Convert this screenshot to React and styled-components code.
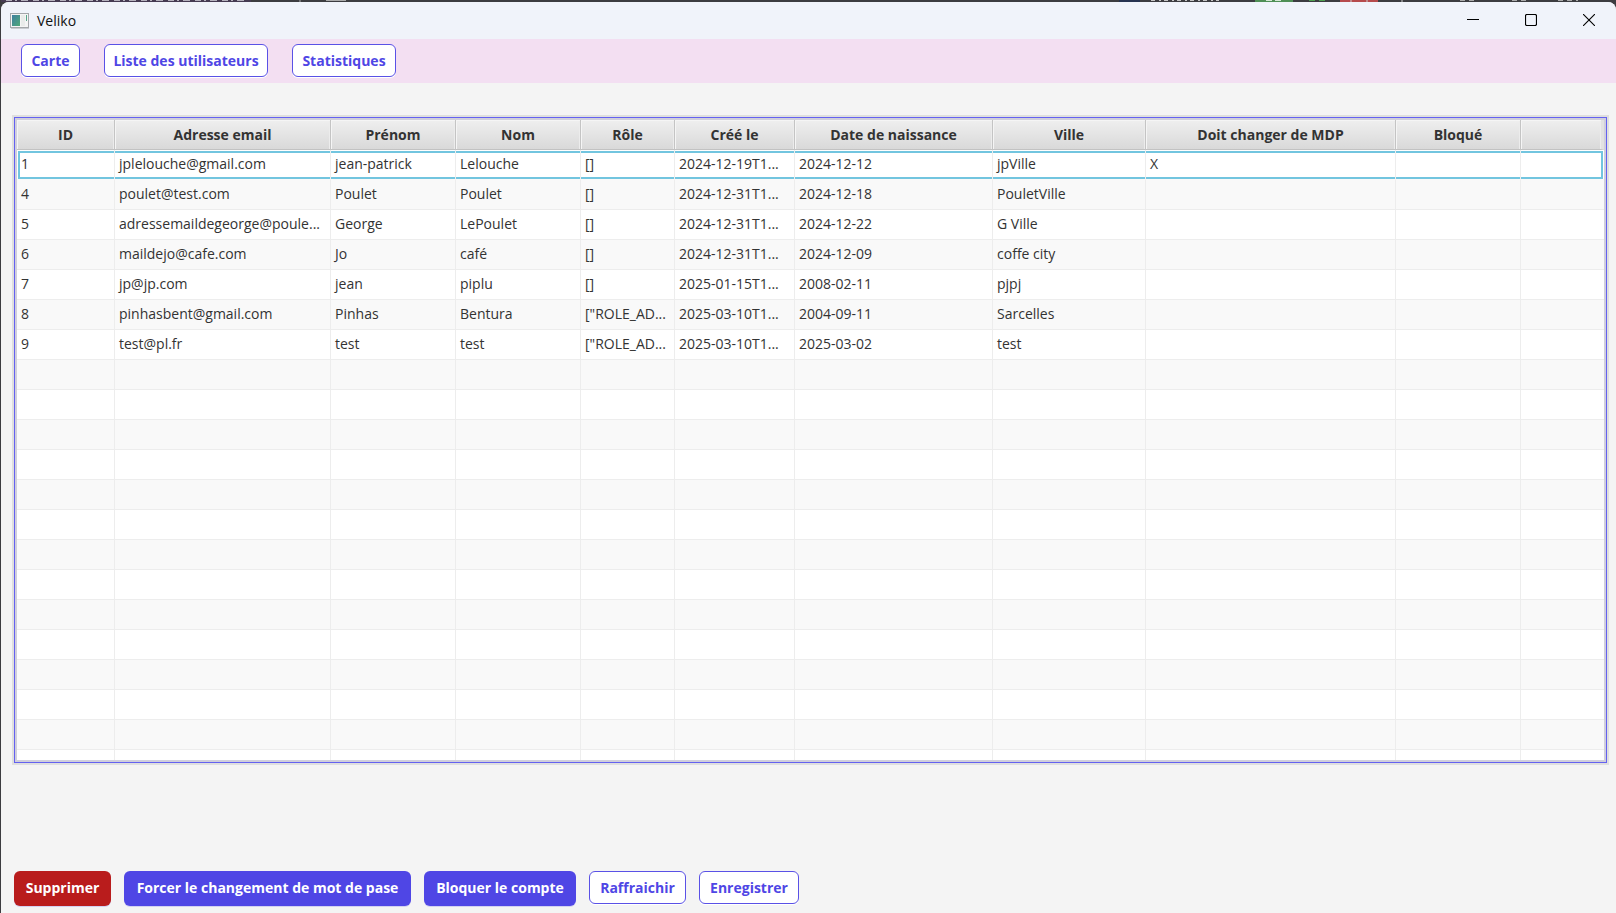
import React from 'react';
import styled, { createGlobalStyle, css } from 'styled-components';

const GlobalStyle = createGlobalStyle`
  * { box-sizing: border-box; }
  html, body { margin: 0; height: 100%; }
  #root { height: 100%; }
  body {
    background: #3c3c40;
    color: #333;
    font-family: "Open Sans", "Noto Sans", sans-serif;
    font-size: 14px;
  }
  button { font: inherit; margin: 0; cursor: pointer; }
`;

const Desktop = styled.div`
  display: flex;
  flex-direction: column;
  min-height: 100%;
  padding-left: 1px;
  overflow: hidden;
`;

const Backdrop = styled.svg`
  display: block;
  width: 100%;
  height: 2px;
  flex: none;
`;

const Window = styled.div`
  flex: 1;
  display: flex;
  flex-direction: column;
  background: #f4f4f4;
  border-radius: 8px 8px 0 0;
  overflow: hidden;
`;

const TitleBar = styled.header`
  display: flex;
  align-items: center;
  height: 37px;
  padding-left: 9px;
  background: #f0f3fa;
  color: #111;
`;

const Title = styled.h1`
  flex: 1;
  margin: 0 0 0 8px;
  font-size: 14px;
  font-weight: 400;
  line-height: 20px;
`;

const WindowControl = styled.button`
  display: flex;
  align-items: center;
  justify-content: center;
  width: 58px;
  height: 37px;
  padding: 0 0 2px;
  border: 0;
  background: none;
`;

const Controls = styled.div`
  display: flex;
  margin-right: -2px;
`;

const NavBar = styled.nav`
  display: flex;
  align-items: center;
  gap: 24px;
  height: 44px;
  padding: 0 20px 1px;
  background: #f3dff2;
`;

const Button = styled.button`
  min-width: ${(p) => p.$width}px;
  height: 33px;
  padding: 0;
  border: 1px solid #5a51e6;
  border-radius: 6px;
  background: #fff;
  color: #4f46e5;
  box-shadow: 0 1px 0 #fff;
  font-weight: 700;
  line-height: 20px;
  text-align: center;
  white-space: nowrap;
  ${(p) =>
    p.$fill &&
    css`
      height: 35px;
      padding-bottom: 2px;
      border: 0;
      background: ${p.$fill};
      color: #fff;
      box-shadow: 0 1px 0 rgba(79, 70, 229, 0.2);
    `}
`;

const Content = styled.main`
  flex: 1;
  display: flex;
  flex-direction: column;
  padding: 34px 9px 7px 13px;
`;

const TableFrame = styled.div`
  padding: 2px;
  border: 1px solid #6461f0;
  outline: 2px solid #dfdfdf;
  background: #d0cfdc;
`;

const TableView = styled.div`
  height: 640px;
  overflow: hidden;
  background: #fff;
`;

const Table = styled.table`
  width: 100%;
  table-layout: fixed;
  border-collapse: separate;
  border-spacing: 0;
`;

const Column = styled.col`
  width: ${(p) => (p.$width ? `${p.$width}px` : 'auto')};
`;

const HeadCell = styled.th`
  height: 30px;
  padding: 0 4px;
  border-right: 1px solid #c4c4c4;
  border-bottom: 1px solid #c2c2c2;
  background: linear-gradient(#efefef, #d9d9d9);
  box-shadow: inset 1px 1px 0 #f5f5f5, inset -1px 0 0 #ececec;
  font-weight: 700;
  line-height: 20px;
  text-align: center;
  white-space: nowrap;
  &:last-child {
    border-right: 3px solid #e2e2e2;
  }
`;

const Cell = styled.td`
  position: relative;
  height: 30px;
  padding: 0 4px 2px;
  border-right: 1px solid #ededed;
  border-bottom: 1px solid #ededed;
  line-height: 20px;
  white-space: nowrap;
  overflow: hidden;
  &:last-child {
    border-right: 0;
  }
`;

const Row = styled.tr`
  background: ${(p) => (p.$striped ? '#f9f9f9' : '#fff')};
  ${(p) =>
    p.$focused &&
    css`
      ${Cell} {
        border-bottom-color: #f9f9f9;
      }
      ${Cell}::after {
        content: '';
        position: absolute;
        inset: 1px 0 0;
        border: solid #72c5df;
        border-width: 2px 0;
      }
      ${Cell}:first-child::after {
        left: 1px;
        border-left-width: 2px;
      }
      ${Cell}:last-child::after {
        right: 1px;
        border-right-width: 2px;
      }
    `}
`;

const Actions = styled.footer`
  display: flex;
  align-items: flex-start;
  gap: 13px;
  margin-top: auto;
`;

const columns = [
  { label: 'ID', width: 98 },
  { label: 'Adresse email', width: 216 },
  { label: 'Prénom', width: 125 },
  { label: 'Nom', width: 125 },
  { label: 'Rôle', width: 94 },
  { label: 'Créé le', width: 120 },
  { label: 'Date de naissance', width: 198 },
  { label: 'Ville', width: 153 },
  { label: 'Doit changer de MDP', width: 250 },
  { label: 'Bloqué', width: 125 },
  { label: '' },
];

const users = [
  ['1', 'jplelouche@gmail.com', 'jean-patrick', 'Lelouche', '[]', '2024-12-19T1...', '2024-12-12', 'jpVille', 'X'],
  ['4', 'poulet@test.com', 'Poulet', 'Poulet', '[]', '2024-12-31T1...', '2024-12-18', 'PouletVille'],
  ['5', 'adressemaildegeorge@poule...', 'George', 'LePoulet', '[]', '2024-12-31T1...', '2024-12-22', 'G Ville'],
  ['6', 'maildejo@cafe.com', 'Jo', 'café', '[]', '2024-12-31T1...', '2024-12-09', 'coffe city'],
  ['7', 'jp@jp.com', 'jean', 'piplu', '[]', '2025-01-15T1...', '2008-02-11', 'pjpj'],
  ['8', 'pinhasbent@gmail.com', 'Pinhas', 'Bentura', '["ROLE_AD...', '2025-03-10T1...', '2004-09-11', 'Sarcelles'],
  ['9', 'test@pl.fr', 'test', 'test', '["ROLE_AD...', '2025-03-10T1...', '2025-03-02', 'test'],
];

const ROW_COUNT = 21;
const rows = Array.from({ length: ROW_COUNT }, (_, i) => users[i] || []);

const AppIcon = () => (
  <svg width="19" height="16" viewBox="0 0 19 16" aria-hidden="true">
    <defs>
      <linearGradient id="screen" x1="0" y1="0" x2="1" y2="1">
        <stop offset="0" stopColor="#3f7fa0" />
        <stop offset="1" stopColor="#4fa878" />
      </linearGradient>
    </defs>
    <rect x="0.5" y="0.5" width="18" height="14" fill="#f4f4f4" stroke="#a3a6aa" />
    <rect x="2" y="2" width="8" height="11" fill="url(#screen)" />
    <rect x="11" y="2" width="4" height="11" fill="#e9ebea" />
    <rect x="16" y="2" width="1" height="6" fill="#55a58a" />
    <path d="M1 15.5h18" stroke="#c9ccd0" />
  </svg>
);

const BackdropStrip = () => (
  <Backdrop aria-hidden="true">
    <rect width="250" height="2" fill="#453a52" />
    <path d="M5 .5h240" stroke="#b5b1bd" strokeDasharray="6 3 2 4 7 5" />
    <path d="M299 0v2M325 .5h20" stroke="#aaa" />
    <rect x="1118" width="21" height="2" fill="#263250" />
    <path d="M1150 .5h68" stroke="#c5c5c5" strokeDasharray="4 4 2 3" />
    <rect x="1254" width="38" height="2" fill="#4f8f55" />
    <path d="M1265 .5h17" stroke="#d5e8d5" strokeDasharray="6 3" />
    <path d="M1308 .5h16" stroke="#4f9f50" strokeDasharray="6 4" />
    <rect x="1339" width="38" height="2" fill="#b64a4c" />
    <path d="M1350 0v2M1366 0v2M1401 0v2" stroke="#ccc" />
    <path d="M1459 .5h18M1511 .5h14M1557 .5h20" stroke="#aaa" strokeDasharray="5 4" />
  </Backdrop>
);

export default function App() {
  return (
    <>
      <GlobalStyle />
      <Desktop>
        <BackdropStrip />
        <Window>
          <TitleBar>
            <AppIcon />
            <Title>Veliko</Title>
            <Controls>
              <WindowControl aria-label="Réduire">
                <svg width="12" height="12" viewBox="0 0 12 12">
                  <path d="M0 5.5h12" stroke="#000" />
                </svg>
              </WindowControl>
              <WindowControl aria-label="Agrandir">
                <svg width="12" height="12" viewBox="0 0 12 12">
                  <rect x="0.5" y="0.5" width="11" height="11" rx="1.5" fill="none" stroke="#000" strokeWidth="1.2" />
                </svg>
              </WindowControl>
              <WindowControl aria-label="Fermer">
                <svg width="12" height="12" viewBox="0 0 12 12">
                  <path d="M0 0l12 12M12 0L0 12" stroke="#000" strokeWidth="1.1" />
                </svg>
              </WindowControl>
            </Controls>
          </TitleBar>
          <NavBar>
            <Button $width={59}>Carte</Button>
            <Button $width={164}>Liste des utilisateurs</Button>
            <Button $width={104}>Statistiques</Button>
          </NavBar>
          <Content>
            <TableFrame>
              <TableView>
                <Table>
                  <colgroup>
                    {columns.map((c, i) => (
                      <Column key={i} $width={c.width} />
                    ))}
                  </colgroup>
                  <thead>
                    <tr>
                      {columns.map((c, i) => (
                        <HeadCell key={i} scope="col">{c.label}</HeadCell>
                      ))}
                    </tr>
                  </thead>
                  <tbody>
                    {rows.map((user, r) => (
                      <Row key={r} $striped={r % 2 === 1} $focused={r === 0}>
                        {columns.map((_, c) => (
                          <Cell key={c}>{user[c]}</Cell>
                        ))}
                      </Row>
                    ))}
                  </tbody>
                </Table>
              </TableView>
            </TableFrame>
            <Actions>
              <Button $width={97} $fill="#b91c1c">Supprimer</Button>
              <Button $width={287} $fill="#4f46e5">Forcer le changement de mot de pase</Button>
              <Button $width={152} $fill="#4f46e5">Bloquer le compte</Button>
              <Button $width={97}>Raffraichir</Button>
              <Button $width={100}>Enregistrer</Button>
            </Actions>
          </Content>
        </Window>
      </Desktop>
    </>
  );
}
